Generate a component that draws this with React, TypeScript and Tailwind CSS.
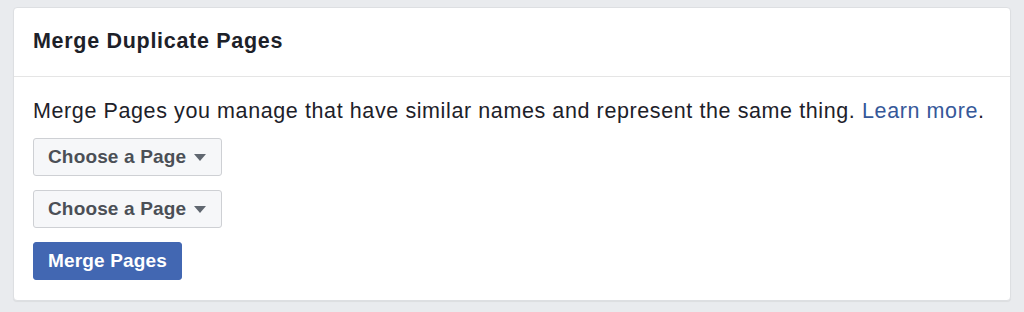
export default function App() {
  return (
    <div className="h-[312px] w-full bg-[#e9ebee] px-[13px] pt-[7px] font-['Liberation_Sans',Arial,sans-serif]">
      <div className="rounded-[4px] border border-[#dddfe2] bg-white shadow-[0_1px_1px_rgba(0,0,0,0.06)]">
        {/* header */}
        <div className="flex h-[69px] items-center border-b border-[#e5e5e5] px-[19px]">
          <h2 className="text-[21.5px] font-bold leading-none tracking-[0.7px] text-[#1d2129]">
            Merge Duplicate Pages
          </h2>
        </div>

        {/* body */}
        <div className="px-[19px] pb-[20px] pt-[20px]">
          <p className="text-[21.5px] leading-[28px] tracking-[0.6px] text-[#1d2129]">
            Merge Pages you manage that have similar names and represent the
            same thing.{" "}
            <a href="#" className="text-[#365899]">
              Learn more
            </a>
            .
          </p>

          <div className="mt-[13px] flex flex-col items-start gap-[14px]">
            <PageSelect />
            <PageSelect />
            <button
              type="button"
              className="h-[38px] rounded-[3px] border border-[#4267b2] bg-[#4267b2] px-[14px] text-[19px] font-bold tracking-[0.15px] text-white"
            >
              Merge Pages
            </button>
          </div>
        </div>
      </div>
    </div>
  );
}

function PageSelect() {
  return (
    <button
      type="button"
      className="flex h-[38px] items-center gap-[8px] rounded-[3px] border border-[#ced0d4] bg-[#f6f7f9] pl-[14px] pr-[15px] text-[19px] font-bold tracking-[0.15px] text-[#4b4f56]"
    >
      <span>Choose a Page</span>
      <svg width="12" height="7" viewBox="0 0 12 7" className="mt-[1px]">
        <path d="M0 0h12L6 7z" fill="#606770" />
      </svg>
    </button>
  );
}
